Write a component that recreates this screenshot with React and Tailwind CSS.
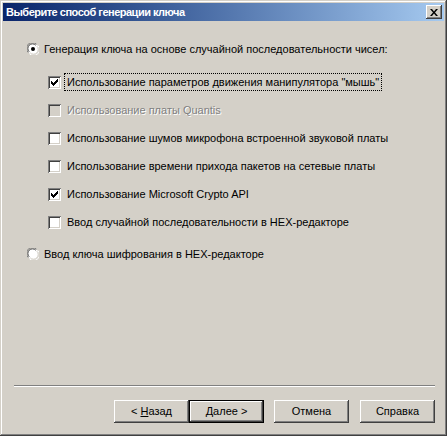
import React from "react";

const raised =
  "shadow-[inset_-1px_-1px_#404040,inset_1px_1px_#ffffff,inset_-2px_-2px_#808080,inset_2px_2px_#d4d0c8]";

const CheckMark = () => (
  <svg width="7" height="7" viewBox="0 0 7 7" className="block">
    <path d="M0 2h1v1h1v1h1v-1h1v-1h1v-1h1v-1h1v3h-1v1h-1v1h-1v1h-1v1h-1v-1h-1v-1h-1z" fill="#000" />
  </svg>
);

const CheckBox = ({ checked, disabled }) => (
  <div
    className={`w-[13px] h-[13px] flex items-center justify-center shrink-0 shadow-[inset_1px_1px_#808080,inset_-1px_-1px_#ffffff,inset_2px_2px_#404040,inset_-2px_-2px_#d4d0c8] ${
      disabled ? "bg-[#d4d0c8]" : "bg-white"
    }`}
  >
    {checked && <CheckMark />}
  </div>
);

const Radio = ({ checked }) => (
  <svg width="12" height="12" viewBox="0 0 12 12" className="shrink-0">
    <circle cx="6" cy="6" r="5.5" fill="#ffffff" />
    <path d="M1.2 9.5A5.5 5.5 0 0 1 9.5 1.2" stroke="#808080" strokeWidth="1" fill="none" />
    <path d="M2.2 8.8A4.5 4.5 0 0 1 8.8 2.2" stroke="#404040" strokeWidth="1" fill="none" />
    <path d="M2.5 10.8A5.5 5.5 0 0 0 10.8 2.5" stroke="#ffffff" strokeWidth="1" fill="none" />
    <path d="M3.2 9.8A4.5 4.5 0 0 0 9.8 3.2" stroke="#d4d0c8" strokeWidth="1" fill="none" />
    {checked && <circle cx="6" cy="6" r="2" fill="#000" />}
  </svg>
);

const CheckRow = ({ checked, disabled, focused, children }) => (
  <div className="h-[28px] flex items-center">
    <CheckBox checked={checked} disabled={disabled} />
    <span
      className={`ml-[3px] px-[2px] leading-[16px] border border-dotted ${
        focused ? "border-black" : "border-transparent"
      } ${disabled ? "text-[#808080] [text-shadow:1px_1px_#ffffff]" : "text-black"}`}
    >
      {children}
    </span>
  </div>
);

const Button = ({ children, isDefault }) => (
  <button
    className={`w-[75px] h-[23px] bg-[#d4d0c8] text-black text-[11px] flex items-center justify-center ${
      isDefault ? "border border-black" : ""
    }`}
  >
    <span className={`w-full h-full flex items-center justify-center ${raised}`}>{children}</span>
  </button>
);

export default function App() {
  return (
    <div className="w-[447px] h-[436px] bg-[#d4d0c8] p-[3px] flex flex-col font-['Liberation_Sans',Arial,sans-serif] text-[11px] text-black shadow-[inset_-1px_-1px_#404040,inset_1px_1px_#d4d0c8,inset_-2px_-2px_#808080,inset_2px_2px_#ffffff]">
      {/* Title bar */}
      <div className="h-[18px] flex items-center justify-between bg-gradient-to-r from-[#0a246a] to-[#a6caf0] pl-[3px] pr-[2px]">
        <span className="text-white font-bold text-[11px] leading-none tracking-[-0.5px]">Выберите способ генерации ключа</span>
        <div className={`w-[16px] h-[14px] bg-[#d4d0c8] flex items-center justify-center ${raised}`}>
          <svg width="8" height="7" viewBox="0 0 8 7">
            <path d="M0 0h2l2 2.5L6 0h2L5 3.5 8 7H6L4 4.5 2 7H0l3-3.5z" fill="#000" />
          </svg>
        </div>
      </div>

      {/* Body */}
      <div className="flex-1 flex flex-col">
        <div className="pl-[24px] pt-[19px]">
          <div className="h-[18px] flex items-center gap-[5px]">
            <Radio checked />
            <span>Генерация ключа на основе случайной последовательности чисел:</span>
          </div>

          <div className="ml-[21px] mt-[10px] flex flex-col">
            <CheckRow checked focused>
              Использование параметров движения манипулятора "мышь"
            </CheckRow>
            <CheckRow disabled>Использование платы Quantis</CheckRow>
            <CheckRow>Использование шумов микрофона встроенной звуковой платы</CheckRow>
            <CheckRow>Использование времени прихода пакетов на сетевые платы</CheckRow>
            <CheckRow checked>Использование Microsoft Crypto API</CheckRow>
            <CheckRow>Ввод случайной последовательности в HEX-редакторе</CheckRow>
          </div>

          <div className="h-[18px] mt-[9px] flex items-center gap-[5px]">
            <Radio />
            <span>Ввод ключа шифрования в HEX-редакторе</span>
          </div>
        </div>

        <div className="flex-1" />

        <div className="ml-[11px] mr-[9px] h-[2px] border-t border-t-[#808080] border-b border-b-white" />

        <div className="mt-[13px] mb-[10px] pr-[9px] flex justify-end">
          <Button>
            &lt;&nbsp;<span className="underline">Н</span>азад
          </Button>
          <Button isDefault>
            <span className="underline">Д</span>алее &gt;
          </Button>
          <div className="w-[10px]" />
          <Button>Отмена</Button>
          <div className="w-[11px]" />
          <Button>Справка</Button>
        </div>
      </div>
    </div>
  );
}
